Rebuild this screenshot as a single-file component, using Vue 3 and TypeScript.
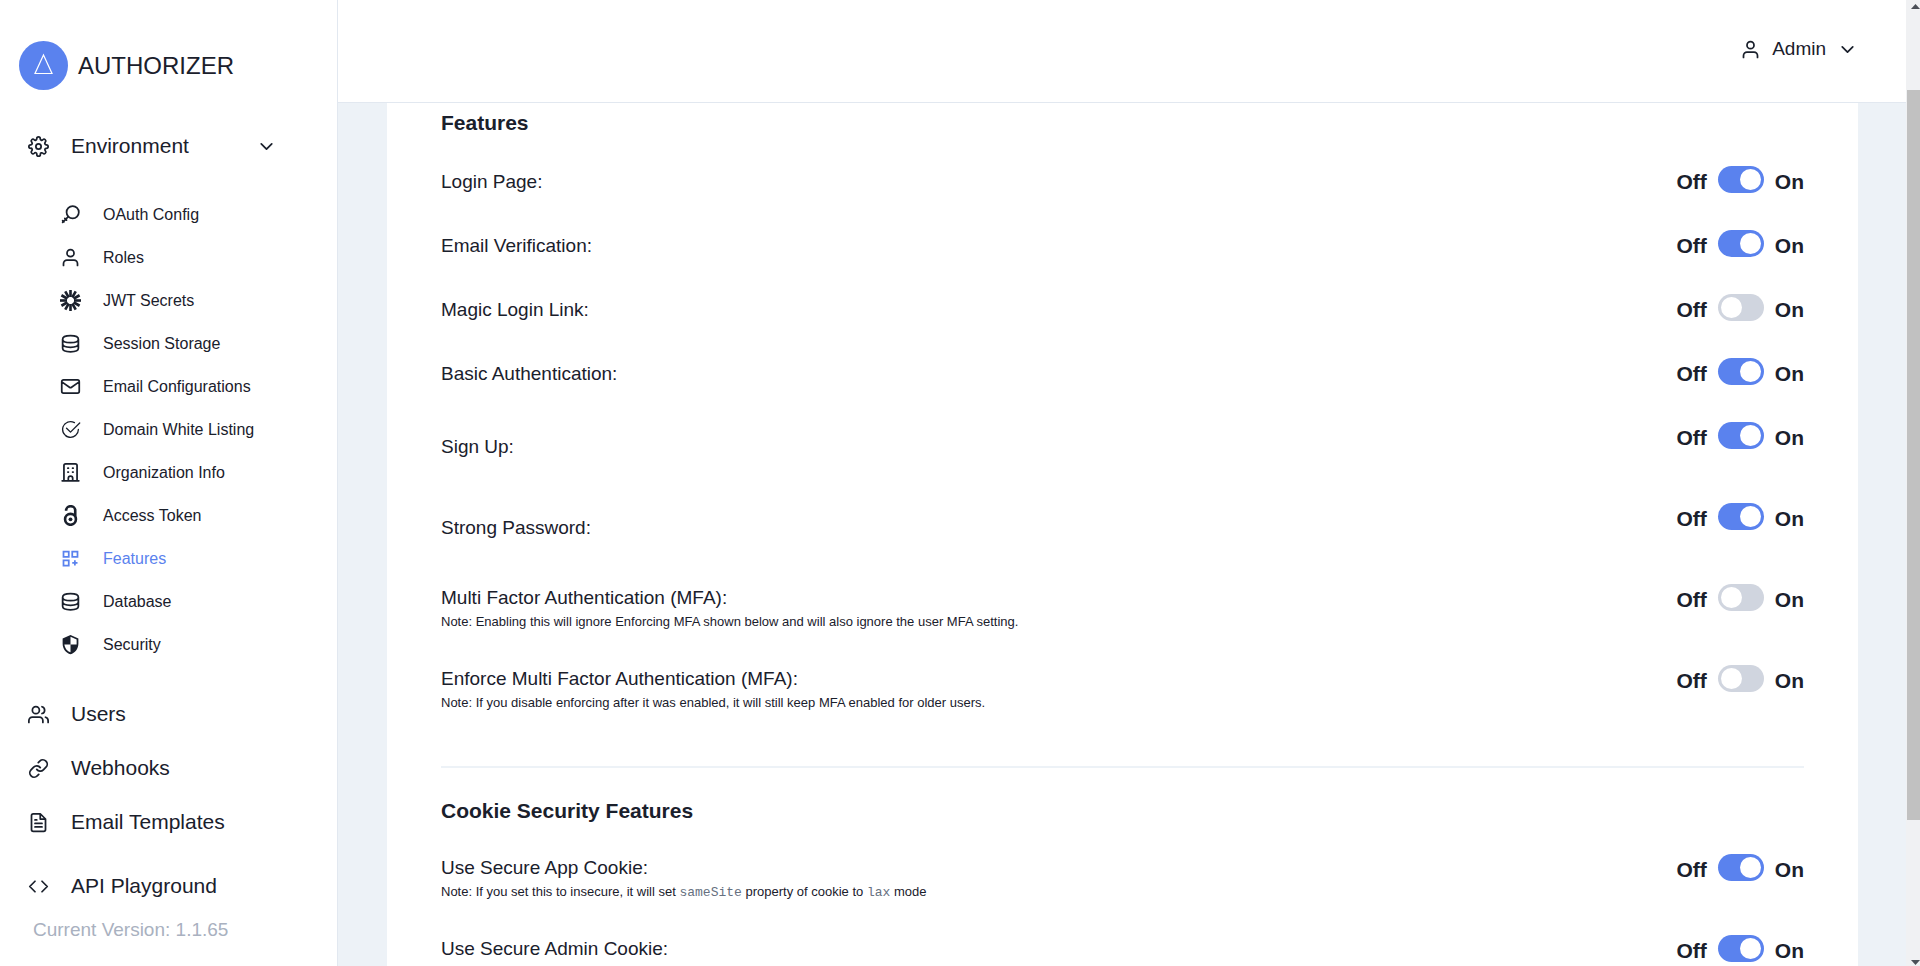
<script setup lang="ts">
import { reactive, ref } from 'vue'

interface Feature {
  id: string
  label: string
  on: boolean
  layout: 'plain' | 'tall' | 'noted'
  note?: string
}

const subItems = [
  { name: 'OAuth Config', icon: 'key' },
  { name: 'Roles', icon: 'user' },
  { name: 'JWT Secrets', icon: 'burst' },
  { name: 'Session Storage', icon: 'database' },
  { name: 'Email Configurations', icon: 'mail' },
  { name: 'Domain White Listing', icon: 'check' },
  { name: 'Organization Info', icon: 'building' },
  { name: 'Access Token', icon: 'open' },
  { name: 'Features', icon: 'grid' },
  { name: 'Database', icon: 'database' },
  { name: 'Security', icon: 'shield' },
]
const active = ref('Features')

const mainItems = [
  { name: 'Users', icon: 'users' },
  { name: 'Webhooks', icon: 'link' },
  { name: 'Email Templates', icon: 'file' },
  { name: 'API Playground', icon: 'code' },
]

const features = reactive<Feature[]>([
  { id: 'login', label: 'Login Page:', on: true, layout: 'plain' },
  { id: 'verify', label: 'Email Verification:', on: true, layout: 'plain' },
  { id: 'magic', label: 'Magic Login Link:', on: false, layout: 'plain' },
  { id: 'basic', label: 'Basic Authentication:', on: true, layout: 'plain' },
  { id: 'signup', label: 'Sign Up:', on: true, layout: 'tall' },
  { id: 'strong', label: 'Strong Password:', on: true, layout: 'tall' },
  {
    id: 'mfa',
    label: 'Multi Factor Authentication (MFA):',
    on: false,
    layout: 'noted',
    note: 'Note: Enabling this will ignore Enforcing MFA shown below and will also ignore the user MFA setting.',
  },
  {
    id: 'enforce',
    label: 'Enforce Multi Factor Authentication (MFA):',
    on: false,
    layout: 'noted',
    note: 'Note: If you disable enforcing after it was enabled, it will still keep MFA enabled for older users.',
  },
])

const cookies = reactive<Feature[]>([
  {
    id: 'app-cookie',
    label: 'Use Secure App Cookie:',
    on: true,
    layout: 'noted',
    note: 'Note: If you set this to insecure, it will set `sameSite` property of cookie to `lax` mode',
  },
  { id: 'admin-cookie', label: 'Use Secure Admin Cookie:', on: true, layout: 'noted' },
])

const sections = [
  { title: 'Features', rows: features },
  { title: 'Cookie Security Features', rows: cookies },
]

// Odd parts of a note lie between backticks and are set as code.
const noteParts = (note: string): string[] => note.split('`')

// Stroked icons on a 24-unit grid.
const strokes: Record<string, string> = {
  gear: 'M12 9a3 3 0 1 0 0 6 3 3 0 1 0 0-6zM19.4 15a1.65 1.65 0 0 0 .33 1.82l.06.06a2 2 0 0 1-2.83 2.83l-.06-.06a1.65 1.65 0 0 0-2.8 1.17V21a2 2 0 0 1-4 0v-.09a1.65 1.65 0 0 0-2.92-1.26l-.06.06a2 2 0 0 1-2.83-2.83l.06-.06A1.65 1.65 0 0 0 3.09 14H3a2 2 0 0 1 0-4h.09a1.65 1.65 0 0 0 1.26-2.82l-.06-.06a2 2 0 0 1 2.83-2.83l.06.06A1.65 1.65 0 0 0 10 3.09V3a2 2 0 0 1 4 0v.09a1.65 1.65 0 0 0 2.82 1.26l.06-.06a2 2 0 0 1 2.83 2.83l-.06.06A1.65 1.65 0 0 0 20.91 10H21a2 2 0 0 1 0 4h-.09a1.65 1.65 0 0 0-1.51 1z',
  user: 'M20 21v-2a4 4 0 0 0-4-4H8a4 4 0 0 0-4 4v2M12 3a4 4 0 1 0 0 8 4 4 0 1 0 0-8z',
  users: 'M17 21v-2a4 4 0 0 0-4-4H5a4 4 0 0 0-4 4v2M9 3a4 4 0 1 0 0 8 4 4 0 1 0 0-8zM23 21v-2a4 4 0 0 0-3-3.87M16 3.13a4 4 0 0 1 0 7.75',
  link: 'M10 13a5 5 0 0 0 7.54.54l3-3a5 5 0 0 0-7.07-7.07l-1.72 1.71M14 11a5 5 0 0 0-7.54-.54l-3 3a5 5 0 0 0 7.07 7.07l1.71-1.71',
  file: 'M14 2H6a2 2 0 0 0-2 2v16a2 2 0 0 0 2 2h12a2 2 0 0 0 2-2V8zM14 2v6h6M16 13H8M16 17H8M10 9H8',
  code: 'M16 18l6-6-6-6M8 6l-6 6 6 6',
  chevron: 'M6 9l6 6 6-6',
  key: 'M14.500 2.500a7 7 0 1 0 0 14 7 7 0 1 0 0-14zM9.500 14.500l-6.500 6.500M5.500 16.500l2 2M3 19l1.500 1.500',
  database: 'M12 3c-5 0-9 1.600-9 4s4 4 9 4 9-1.600 9-4-4-4-9-4zM3 7v10.500c0 2.400 4 4 9 4s9-1.600 9-4V7M3 12.300c0 2.400 4 4 9 4s9-1.600 9-4',
  mail: 'M4 4.500h16a2 2 0 0 1 2 2v11a2 2 0 0 1-2 2H4a2 2 0 0 1-2-2v-11a2 2 0 0 1 2-2zM2.500 7l8.300 5.800a2 2 0 0 0 2.400 0L21.500 7',
  building: 'M2.500 21.500h19M4.500 21.500V4a2 2 0 0 1 2-2h11a2 2 0 0 1 2 2v17.500M9.500 21.500v-3a2.500 2.500 0 0 1 5 0v3M9 7h.6M14.400 7h.6M9 11.500h.6M14.400 11.500h.6',
}
// Filled icons, each with its own grid size.
const fills: Record<string, { size: number; d: string }> = {
  check: {
    size: 16,
    d: 'M2.500 8a5.500 5.500 0 0 1 8.250-4.764.5.5 0 0 0 .5-.866A6.500 6.500 0 1 0 14.500 8a.5.5 0 0 0-1 0 5.500 5.500 0 1 1-11 0zM15.354 3.354a.5.5 0 0 0-.708-.708L8 9.293 5.354 6.646a.5.5 0 1 0-.708.708l3 3a.5.5 0 0 0 .708 0l7-7z',
  },
  grid: {
    size: 24,
    d: 'M3 3h8v8H3zM5 5v4h4V5zM13 3h8v8h-8zM15 5v4h4V5zM3 13h8v8H3zM5 15v4h4v-4zM16 14h2v2h2v2h-2v2h-2v-2h-2v-2h2z',
  },
  shield: {
    size: 24,
    d: 'M12 1L3 5v6c0 5.550 3.840 10.740 9 12 5.160-1.260 9-6.450 9-12V5zM12 3.190V12H5c.53 4.120 3.280 7.790 7 8.930V12h7V6.300z',
  },
}
</script>

<template>
  <div class="app">
    <nav class="sidebar">
      <div class="brand">
        <svg class="logo" viewBox="0 0 49 49" aria-hidden="true">
          <circle cx="24.500" cy="24.500" r="24.500" fill="#5a82ee" />
          <path d="M24.500 14L33 32.500H16z" fill="none" stroke="#fff" stroke-width="1.200" />
        </svg>
        <span>AUTHORIZER</span>
      </div>

      <button type="button" class="main-item">
        <svg class="icon" viewBox="0 0 24 24"><path :d="strokes.gear" /></svg>
        <span class="grow">Environment</span>
        <svg class="icon" viewBox="0 0 24 24"><path :d="strokes.chevron" /></svg>
      </button>

      <ul class="sub-list">
        <li v-for="item in subItems" :key="item.name">
          <a href="#" class="sub-item" :class="{ active: active === item.name }" @click.prevent="active = item.name">
            <svg v-if="strokes[item.icon]" class="icon" viewBox="0 0 24 24"><path :d="strokes[item.icon]" /></svg>
            <svg v-else-if="fills[item.icon]" class="icon filled" :viewBox="`0 0 ${fills[item.icon].size} ${fills[item.icon].size}`">
              <path :fill-rule="item.icon === 'check' ? 'nonzero' : 'evenodd'" :d="fills[item.icon].d" />
            </svg>
            <svg v-else-if="item.icon === 'burst'" class="icon burst" viewBox="0 0 24 24">
              <path v-for="n in 12" :key="n" d="M12 0v8" :transform="`rotate(${n * 30} 12 12)`" />
            </svg>
            <svg v-else class="icon open" viewBox="0 0 24 24">
              <circle cx="12" cy="16.400" r="6.200" />
              <circle cx="12" cy="16.400" r="2.200" class="dot" />
              <path d="M7 6.500V6a5.200 4.600 0 0 1 10.400 0v7" />
            </svg>
            <span>{{ item.name }}</span>
          </a>
        </li>
      </ul>

      <a v-for="item in mainItems" :key="item.name" href="#" class="main-item" :class="{ apart: item.icon === 'code' }">
        <svg class="icon" viewBox="0 0 24 24"><path :d="strokes[item.icon]" /></svg>
        <span>{{ item.name }}</span>
      </a>
      <p class="version">Current Version: 1.1.65</p>
    </nav>

    <div class="page">
      <header class="topbar">
        <button type="button" class="account">
          <svg class="icon" viewBox="0 0 24 24"><path :d="strokes.user" /></svg>
          <span>Admin</span>
          <svg class="icon" viewBox="0 0 24 24"><path :d="strokes.chevron" /></svg>
        </button>
      </header>

      <main class="content">
        <div class="card">
          <section v-for="section in sections" :key="section.title" class="section">
            <h2>{{ section.title }}</h2>
            <div class="rows">
              <div v-for="row in section.rows" :key="row.id" class="row" :class="row.layout">
                <div>
                  <label :for="row.id">{{ row.label }}</label>
                  <p v-if="row.note" class="note">
                    <template v-for="(part, i) in noteParts(row.note)" :key="i"
                      ><code v-if="i % 2">{{ part }}</code
                      ><template v-else>{{ part }}</template></template
                    >
                  </p>
                </div>
                <div class="control">
                  <span>Off</span>
                  <input :id="row.id" v-model="row.on" type="checkbox" role="switch" class="switch" />
                  <span>On</span>
                </div>
              </div>
            </div>
          </section>
        </div>
      </main>
    </div>

    <div class="scrollbar" aria-hidden="true">
      <svg class="arrow" viewBox="0 0 18 24"><path d="M5 9l4.500-5 4.500 5z" /></svg>
      <div class="before"></div>
      <div class="thumb"></div>
      <div class="after"></div>
      <svg class="arrow" viewBox="0 0 18 24"><path d="M5 18l4.500 5 4.500-5z" /></svg>
    </div>
  </div>
</template>

<style>
body {
  margin: 0;
}
</style>

<style scoped>
.app {
  display: flex;
  height: 100vh;
  overflow: hidden;
  background: #edf2f7;
  color: #1a202c;
  font-family: 'Liberation Sans', Arial, sans-serif;
}
h2,
p,
ul {
  margin: 0;
  padding: 0;
}
button {
  border: 0;
  background: none;
  color: inherit;
  font: inherit;
  cursor: pointer;
}
a {
  color: inherit;
  text-decoration: none;
}
.icon {
  flex: none;
  width: 21px;
  height: 21px;
  fill: none;
  stroke: currentColor;
  stroke-width: 2;
  stroke-linecap: round;
  stroke-linejoin: round;
}
.filled {
  fill: currentColor;
  stroke: none;
}
.burst,
.open {
  stroke-width: 3;
  stroke-linecap: butt;
}
.dot {
  fill: currentColor;
  stroke: none;
}

.sidebar {
  box-sizing: border-box;
  flex: 0 0 338px;
  border-right: 1px solid #e2e8f0;
  background: #fff;
  overflow: hidden;
}
.brand {
  display: flex;
  align-items: center;
  gap: 10px;
  padding: 41px 19px 29px;
  font-size: 24px;
}
.logo {
  width: 49px;
  height: 49px;
}
.main-item {
  box-sizing: border-box;
  display: flex;
  align-items: center;
  gap: 22px;
  width: 100%;
  height: 54px;
  padding: 0 60px 0 28px;
  font-size: 21px;
  text-align: left;
}
.main-item.apart {
  margin-top: 10px;
}
.grow {
  flex: 1;
}
.sub-list {
  padding: 20px 0 21px;
  list-style: none;
}
.sub-item {
  display: flex;
  align-items: center;
  gap: 22px;
  height: 43px;
  padding-left: 60px;
  font-size: 16px;
}
.sub-item.active {
  color: #5a82ee;
}
.version {
  padding-left: 33px;
  color: #a9b1c0;
  font-size: 19px;
  line-height: 34px;
}

.page {
  display: flex;
  flex: 1;
  flex-direction: column;
  min-width: 0;
}
.topbar {
  box-sizing: border-box;
  display: flex;
  flex: none;
  align-items: center;
  justify-content: flex-end;
  height: 103px;
  padding: 0 48px 4px;
  border-bottom: 1px solid #e2e8f0;
  background: #fff;
}
.account {
  display: flex;
  align-items: center;
  gap: 11px;
  padding: 0;
  font-size: 19px;
}
.content {
  flex: 1;
  overflow-y: auto;
  scrollbar-width: none;
}
.card {
  margin: 0 48px 0 49px;
  padding: 7px 54px 54px;
  background: #fff;
}
.section + .section {
  margin-top: 52px;
  padding-top: 30px;
  border-top: 2px solid #edf2f7;
}
h2 {
  font-size: 21px;
  line-height: 26px;
}
.rows {
  display: flex;
  flex-direction: column;
  gap: 32px;
  padding-top: 30px;
}
.row {
  display: flex;
  align-items: center;
  justify-content: space-between;
  font-size: 19px;
  line-height: 28px;
}
.row.tall,
.row.noted {
  min-height: 49px;
}
.row.noted {
  align-items: flex-start;
}
.note {
  font-size: 13px;
  line-height: 20px;
}
.note code {
  color: #667080;
  font-family: 'Liberation Mono', monospace;
}
.control {
  display: flex;
  align-items: flex-start;
  align-self: flex-start;
  gap: 11px;
  font-size: 21px;
  font-weight: 700;
  line-height: 32px;
}
.switch {
  display: flex;
  box-sizing: border-box;
  width: 46px;
  height: 27px;
  margin: 0;
  padding: 3px;
  border-radius: 14px;
  appearance: none;
  background: #d0d5df;
  cursor: pointer;
}
.switch::before {
  width: 21px;
  height: 21px;
  border-radius: 50%;
  background: #fff;
  content: '';
}
.switch:checked {
  justify-content: flex-end;
  background: #5a82ee;
}

.scrollbar {
  display: flex;
  flex: 0 0 14px;
  flex-direction: column;
  overflow: hidden;
  background: #f0f1f3;
}
.arrow {
  flex: none;
  width: 18px;
  height: 24px;
  fill: #4b4f57;
}
.before {
  flex: 66;
}
.thumb {
  flex: 730;
  margin-left: 1px;
  background: #c1c1c1;
}
.after {
  flex: 122;
}
</style>
